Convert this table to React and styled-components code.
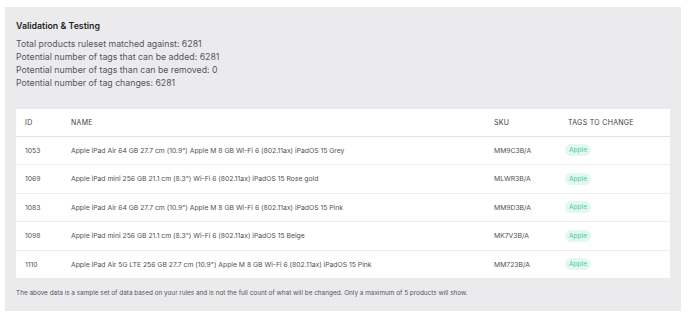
import React from 'react';
import styled, { createGlobalStyle } from 'styled-components';

const GlobalStyle = createGlobalStyle`
  body {
    margin: 0;
    background: #ffffff;
    font-family: Inter, 'Noto Sans', sans-serif;
  }
`;

const Page = styled.div`
  padding: 7px 7px 4px 5px;
`;

const Panel = styled.section`
  background: #ebebed;
  padding: 13px 11px 12px 11px;
  min-height: 304px;
  box-sizing: border-box;
`;

const Title = styled.h2`
  margin: 0 0 6px;
  font-size: 8.8px;
  line-height: 12px;
  font-weight: 600;
  color: #1f1f24;
`;

const Stats = styled.div`
  display: flex;
  flex-direction: column;
  margin-bottom: 19px;
`;

const Stat = styled.p`
  margin: 0;
  font-size: 8.75px;
  line-height: 13px;
  color: #55565c;
`;

const Table = styled.table`
  width: 100%;
  border-collapse: collapse;
  table-layout: fixed;
  background: #ffffff;
`;

const Th = styled.th`
  box-sizing: border-box;
  text-align: left;
  font-size: 7px;
  font-weight: 400;
  letter-spacing: 0.3px;
  text-transform: uppercase;
  color: #3b3c42;
  height: 27px;
  padding: 0 0 0 ${({ pad }) => pad ?? 9}px;
  border-bottom: 1.5px solid #e2e2e5;
  width: ${({ w }) => (w ? `${w}px` : 'auto')};
`;

const Td = styled.td`
  font-size: 6.8px;
  color: #4f5056;
  height: 27.5px;
  padding: 0 0 0 ${({ pad }) => pad ?? 9}px;
  border-bottom: 1px solid #ededf0;
  white-space: nowrap;
  tr:last-child & {
    border-bottom: none;
  }
`;

const Badge = styled.span`
  display: inline-block;
  padding: 2px 4px;
  border-radius: 7px;
  background: #e3f8ee;
  color: #3fcb98;
  font-size: 6.6px;
  line-height: 8px;
`;

const Footer = styled.p`
  margin: 11px 0 0;
  font-size: 6.4px;
  color: #55565c;
`;

const rows = [
  { id: '1053', name: 'Apple iPad Air 64 GB 27.7 cm (10.9") Apple M 8 GB Wi-Fi 6 (802.11ax) iPadOS 15 Grey', sku: 'MM9C3B/A' },
  { id: '1069', name: 'Apple iPad mini 256 GB 21.1 cm (8.3") Wi-Fi 6 (802.11ax) iPadOS 15 Rose gold', sku: 'MLWR3B/A' },
  { id: '1083', name: 'Apple iPad Air 64 GB 27.7 cm (10.9") Apple M 8 GB Wi-Fi 6 (802.11ax) iPadOS 15 Pink', sku: 'MM9D3B/A' },
  { id: '1098', name: 'Apple iPad mini 256 GB 21.1 cm (8.3") Wi-Fi 6 (802.11ax) iPadOS 15 Beige', sku: 'MK7V3B/A' },
  { id: '1110', name: 'Apple iPad Air 5G LTE 256 GB 27.7 cm (10.9") Apple M 8 GB Wi-Fi 6 (802.11ax) iPadOS 15 Pink', sku: 'MM723B/A' },
];

const App = () => (
  <>
    <GlobalStyle />
    <Page>
      <Panel>
        <Title>Validation &amp; Testing</Title>
        <Stats>
          <Stat>Total products ruleset matched against: 6281</Stat>
          <Stat>Potential number of tags that can be added: 6281</Stat>
          <Stat>Potential number of tags than can be removed: 0</Stat>
          <Stat>Potential number of tag changes: 6281</Stat>
        </Stats>
        <Table>
          <thead>
            <tr>
              <Th w={46}>ID</Th>
              <Th>Name</Th>
              <Th w={71} pad={0}>SKU</Th>
              <Th w={105} pad={3}>Tags to change</Th>
            </tr>
          </thead>
          <tbody>
            {rows.map((row) => (
              <tr key={row.id}>
                <Td>{row.id}</Td>
                <Td>{row.name}</Td>
                <Td pad={0}>{row.sku}</Td>
                <Td pad={0}>
                  <Badge>Apple</Badge>
                </Td>
              </tr>
            ))}
          </tbody>
        </Table>
        <Footer>
          The above data is a sample set of data based on your rules and is not the full count of what will be changed. Only a maximum of 5 products will show.
        </Footer>
      </Panel>
    </Page>
  </>
);

export default App;
